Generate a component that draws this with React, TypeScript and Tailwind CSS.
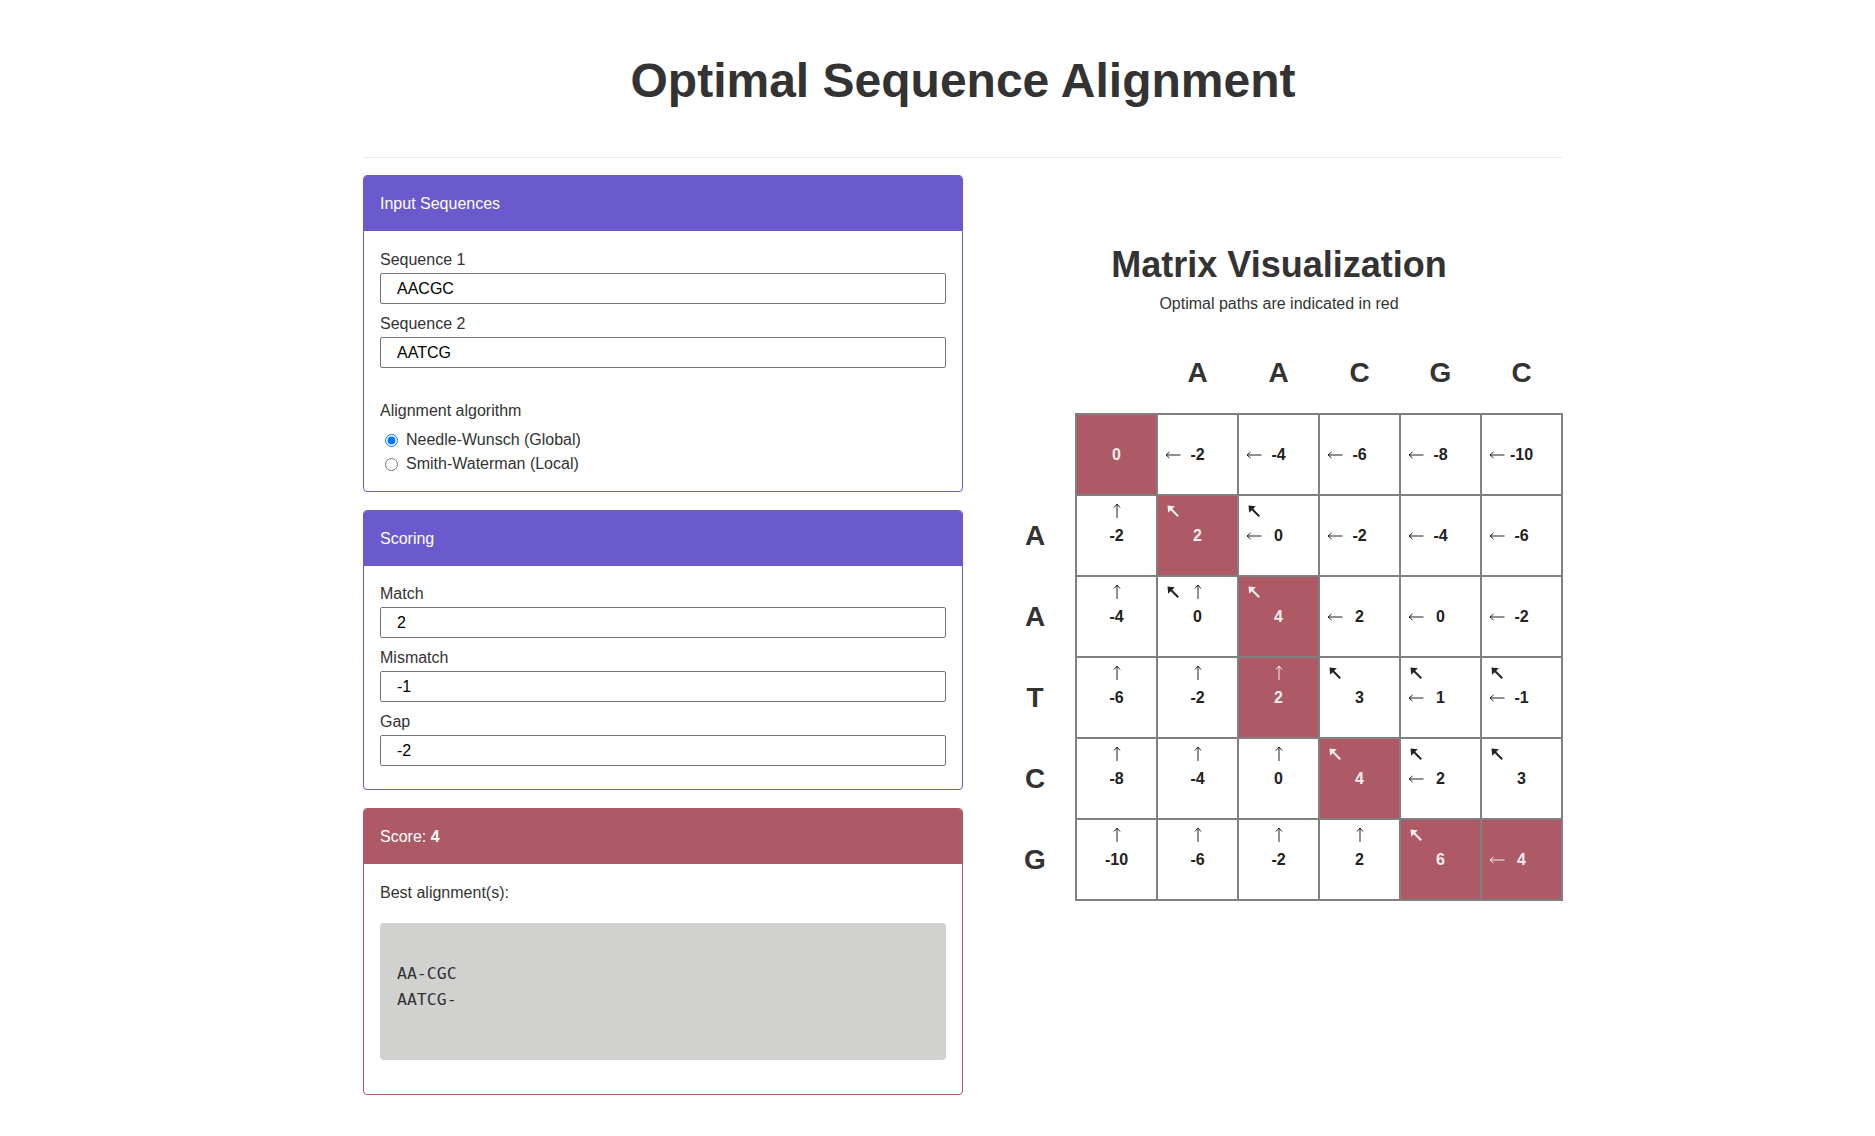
import React from "react";

type Cell = { v: number; d?: boolean; u?: boolean; l?: boolean; hit?: boolean };

const cols = ["", "A", "A", "C", "G", "C"];
const rows = ["", "A", "A", "T", "C", "G"];

const matrix: Cell[][] = [
  [{ v: 0, hit: true }, { v: -2, l: true }, { v: -4, l: true }, { v: -6, l: true }, { v: -8, l: true }, { v: -10, l: true }],
  [{ v: -2, u: true }, { v: 2, d: true, hit: true }, { v: 0, d: true, l: true }, { v: -2, l: true }, { v: -4, l: true }, { v: -6, l: true }],
  [{ v: -4, u: true }, { v: 0, d: true, u: true }, { v: 4, d: true, hit: true }, { v: 2, l: true }, { v: 0, l: true }, { v: -2, l: true }],
  [{ v: -6, u: true }, { v: -2, u: true }, { v: 2, u: true, hit: true }, { v: 3, d: true }, { v: 1, d: true, l: true }, { v: -1, d: true, l: true }],
  [{ v: -8, u: true }, { v: -4, u: true }, { v: 0, u: true }, { v: 4, d: true, hit: true }, { v: 2, d: true, l: true }, { v: 3, d: true }],
  [{ v: -10, u: true }, { v: -6, u: true }, { v: -2, u: true }, { v: 2, u: true }, { v: 6, d: true, hit: true }, { v: 4, l: true, hit: true }],
];

const DiagArrow = () => (
  <svg width="12" height="12" viewBox="0 0 12 12" fill="currentColor">
    <path d="M11.2 11.2L3.5 3.5" stroke="currentColor" strokeWidth="2" />
    <polygon points="0.5,0.5 7.8,1.2 1.2,7.8" />
  </svg>
);

const LeftArrow = () => (
  <svg width="16" height="8" viewBox="0 0 16 8" fill="none" stroke="currentColor" strokeWidth="1">
    <path d="M1 4H15.5M1 4L4.5 1M1 4L4.5 7" />
  </svg>
);

const UpArrow = () => (
  <svg width="8" height="15" viewBox="0 0 8 15" fill="none" stroke="currentColor" strokeWidth="1">
    <path d="M4 1V15M4 1L1 4.5M4 1L7 4.5" />
  </svg>
);

const MatrixCell = ({ cell }: { cell: Cell }) => (
  <td
    className={`border-2 border-[#808080] p-0 ${
      cell.hit ? "bg-[#ad5a66] text-[#eeeeee]" : "bg-white text-[#222]"
    }`}
  >
    <div className="grid h-[79px] w-[79px] grid-cols-[29px_21px_1fr] grid-rows-[29px_21px_1fr]">
      {cell.d && (
        <span className="col-start-1 row-start-1 place-self-center">
          <DiagArrow />
        </span>
      )}
      {cell.u && (
        <span className="col-start-2 row-start-1 place-self-center">
          <UpArrow />
        </span>
      )}
      {cell.l && (
        <span className="col-start-1 row-start-2 place-self-center">
          <LeftArrow />
        </span>
      )}
      <span className="col-start-2 row-start-2 place-self-center whitespace-nowrap text-[16px] font-bold leading-none">
        {cell.v}
      </span>
    </div>
  </td>
);

const Field = ({ label, value, last }: { label: string; value: string; last?: boolean }) => (
  <div className={last ? "" : "mb-[9px]"}>
    <label className="block leading-[22px] text-[#333]">{label}</label>
    <input
      defaultValue={value}
      className="mt-[2px] block h-[31px] w-full rounded-[2px] border border-[#767676] px-4 text-[16px] text-black"
    />
  </div>
);

const Panel = ({
  title,
  tone,
  children,
}: {
  title: React.ReactNode;
  tone: "purple" | "red";
  children: React.ReactNode;
}) => (
  <div
    className={`mb-[18px] overflow-hidden rounded-[4px] border bg-white ${
      tone === "purple" ? "border-[#6a5acd]" : "border-[#ad5a66]"
    }`}
  >
    <div
      className={`flex h-[55px] items-center px-4 text-white ${
        tone === "purple" ? "bg-[#6a5acd]" : "bg-[#ad5a66]"
      }`}
    >
      {title}
    </div>
    {children}
  </div>
);

export default function App() {
  return (
    <div className="min-h-screen bg-white font-['Liberation_Sans',Arial,sans-serif] text-[16px] text-[#333]">
      <div className="ml-[363px] w-[1200px]">
        <h1 className="pt-[54px] text-center text-[48px] font-bold leading-[53px] text-[#333]">
          Optimal Sequence Alignment
        </h1>
        <hr className="mt-[50px] border-t border-[#eeeeee]" />

        <div className="mt-[17px] flex items-start">
          <div className="w-[600px]">
            <Panel title="Input Sequences" tone="purple">
              <div className="px-4 pt-[18px] pb-[15px]">
                <Field label="Sequence 1" value="AACGC" />
                <Field label="Sequence 2" value="AATCG" last />
                <div className="mt-[32px] leading-[22px]">Alignment algorithm</div>
                <div className="mt-[6px]">
                  <label className="flex h-[24px] items-center">
                    <input type="radio" name="algo" defaultChecked className="m-0 ml-[5px] mr-[8px] size-[13px]" />
                    Needle-Wunsch (Global)
                  </label>
                  <label className="flex h-[24px] items-center">
                    <input type="radio" name="algo" className="m-0 ml-[5px] mr-[8px] size-[13px]" />
                    Smith-Waterman (Local)
                  </label>
                </div>
              </div>
            </Panel>

            <Panel title="Scoring" tone="purple">
              <div className="px-4 pt-[17px] pb-[23px]">
                <Field label="Match" value="2" />
                <Field label="Mismatch" value="-1" />
                <Field label="Gap" value="-2" last />
              </div>
            </Panel>

            <Panel
              title={
                <span>
                  Score: <b>4</b>
                </span>
              }
              tone="red"
            >
              <div className="px-4 pt-[18px] pb-[34px]">
                <div className="leading-[22px]">Best alignment(s):</div>
                <div className="mt-[19px] h-[137px] rounded-[4px] bg-[#d1d1d0] px-[17px] pt-[38px] font-['DejaVu_Sans_Mono',monospace] text-[16.5px] leading-[26px] text-[#333]">
                  <div>AA-CGC</div>
                  <div>AATCG-</div>
                </div>
              </div>
            </Panel>
          </div>

          <div className="flex w-[600px] flex-col items-end">
            <div className="text-center">
              <h2 className="mt-[70px] text-[36px] font-bold leading-[40px] text-[#333]">Matrix Visualization</h2>
              <p className="mt-[8px] leading-[22px] text-[#333]">Optimal paths are indicated in red</p>
              <table className="mt-[18px] border-collapse">
                <thead>
                  <tr>
                    <th className="h-[81px] w-[81px]"></th>
                    {cols.map((c, i) => (
                      <th key={i} className="h-[81px] w-[81px] text-[28px] font-bold text-[#333]">
                        {c}
                      </th>
                    ))}
                  </tr>
                </thead>
                <tbody>
                  {matrix.map((row, r) => (
                    <tr key={r}>
                      <th className="w-[81px] text-[28px] font-bold text-[#333]">{rows[r]}</th>
                      {row.map((cell, c) => (
                        <MatrixCell key={c} cell={cell} />
                      ))}
                    </tr>
                  ))}
                </tbody>
              </table>
            </div>
          </div>
        </div>
      </div>
    </div>
  );
}
